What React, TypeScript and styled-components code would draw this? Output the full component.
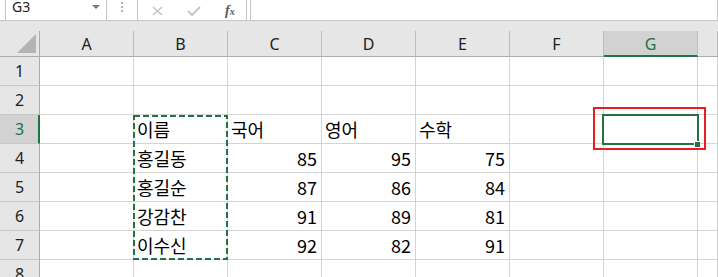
import styled, { createGlobalStyle } from 'styled-components';

const GlobalStyle = createGlobalStyle`
  html, body {
    margin: 0;
    padding: 0;
    background: #ffffff;
    overflow: hidden;
  }
`;

const COLUMNS = ['A', 'B', 'C', 'D', 'E', 'F', 'G', ''];
const SELECTED_COL = 'G';
const SELECTED_ROW = 3;

type CellValue = string | number | undefined;

// B..E columns of each row, rows 1..8
const DATA: CellValue[][] = [
  [],
  [],
  ['이름', '국어', '영어', '수학'],
  ['홍길동', 85, 95, 75],
  ['홍길순', 87, 86, 84],
  ['강감찬', 91, 89, 81],
  ['이수신', 92, 82, 91],
  [],
];

function App() {
  return (
    <Page>
      <GlobalStyle />
      <FormulaBar>
        <NameBox>
          <NameText>G3</NameText>
          <DropArrow />
        </NameBox>
        <Grip>
          <Dot />
          <Dot />
          <Dot />
        </Grip>
        <FxBox>
          <FxIcon>
            <svg width="11" height="10" viewBox="0 0 11 10">
              <path d="M1 1 L10 9 M10 1 L1 9" stroke="#c3c3c3" strokeWidth="1.4" fill="none" />
            </svg>
          </FxIcon>
          <FxIcon>
            <svg width="14" height="10" viewBox="0 0 14 10">
              <path d="M1 5 L5 9 L13 1" stroke="#c3c3c3" strokeWidth="1.8" fill="none" />
            </svg>
          </FxIcon>
          <FxLabel>
            f<sub>x</sub>
          </FxLabel>
        </FxBox>
        <FormulaInput />
      </FormulaBar>
      <Spacer />
      <Sheet>
        <Corner>
          <CornerTriangle />
        </Corner>
        {COLUMNS.map((col, i) => (
          <ColHeader key={`h${i}`} $selected={col === SELECTED_COL}>
            {col}
          </ColHeader>
        ))}
        {DATA.map((row, r) => {
          const rowNo = r + 1;
          return [
            <RowHeader key={`r${rowNo}`} $selected={rowNo === SELECTED_ROW}>
              {rowNo}
            </RowHeader>,
            ...COLUMNS.map((_, c) => {
              const value = c >= 1 && c <= 4 ? row[c - 1] : undefined;
              return (
                <Cell key={`c${rowNo}-${c}`} $numeric={typeof value === 'number'}>
                  {value}
                </Cell>
              );
            }),
          ];
        })}
        <CopyMarquee>
          <svg width="95" height="145" viewBox="0 0 95 145">
            <rect
              x="1"
              y="1"
              width="93"
              height="143"
              fill="none"
              stroke="#217346"
              strokeWidth="2"
              strokeDasharray="6 3"
            />
          </svg>
        </CopyMarquee>
        <ActiveCell />
        <FillHandle />
        <Highlight />
      </Sheet>
    </Page>
  );
}

const Page = styled.div`
  width: 718px;
  height: 277px;
  overflow: hidden;
  background: #ffffff;
`;

const FormulaBar = styled.div`
  display: flex;
  align-items: flex-end;
  height: 21px;
  overflow: hidden;
  background: #ffffff;
  border-bottom: 1px solid #c8c8c8;
  box-sizing: border-box;
  padding-left: 5px;
`;

const NameBox = styled.div`
  position: relative;
  box-sizing: border-box;
  width: 102px;
  height: 26px;
  border: 1px solid #c6c6c6;
  border-bottom: none;
  padding: 4px 0 0 6px;
`;

const NameText = styled.div`
  font-family: 'Noto Sans', sans-serif;
  font-size: 14px;
  line-height: 16px;
  color: #222222;
`;

const DropArrow = styled.div`
  position: absolute;
  right: 6px;
  top: 10px;
  width: 0;
  height: 0;
  border-left: 4px solid transparent;
  border-right: 4px solid transparent;
  border-top: 4px solid #7a7a7a;
`;

const Grip = styled.div`
  display: flex;
  flex-direction: column;
  align-self: flex-start;
  gap: 2px;
  margin: 2px 14px 0 14px;
`;

const Dot = styled.div`
  width: 2px;
  height: 2px;
  background: #b0b0b0;
`;

const FxBox = styled.div`
  display: flex;
  align-items: center;
  box-sizing: border-box;
  width: 110px;
  height: 26px;
  border: 1px solid #c6c6c6;
  border-bottom: none;
  padding: 6px 0 0 14px;
  gap: 24px;
`;

const FxIcon = styled.div`
  display: flex;
  align-items: center;
`;

const FxLabel = styled.div`
  font-family: 'Liberation Serif', serif;
  font-style: italic;
  font-weight: bold;
  font-size: 14px;
  color: #5a5a5a;

  sub {
    font-size: 10px;
    vertical-align: baseline;
  }
`;

const FormulaInput = styled.div`
  flex: 1;
  height: 26px;
  margin-left: 3px;
  border: 1px solid #c6c6c6;
  border-bottom: none;
  box-sizing: border-box;
`;

const Spacer = styled.div`
  height: 10px;
  background: #e6e6e6;
`;

const Sheet = styled.div`
  position: relative;
  display: grid;
  grid-template-columns: 40px repeat(7, 94px) 1fr;
  grid-template-rows: 26px repeat(8, 29px);
  background: #ffffff;
`;

const Corner = styled.div`
  position: relative;
  background: #e6e6e6;
  border-right: 1px solid #ababab;
  border-bottom: 1px solid #ababab;
`;

const CornerTriangle = styled.div`
  position: absolute;
  right: 3px;
  bottom: 3px;
  width: 19px;
  height: 19px;
  background: #b4b4b4;
  clip-path: polygon(100% 0, 100% 100%, 0 100%);
`;

const ColHeader = styled.div<{ $selected: boolean }>`
  display: flex;
  align-items: center;
  justify-content: center;
  box-sizing: border-box;
  background: ${(p) => (p.$selected ? '#d2d2d2' : '#e6e6e6')};
  border-right: 1px solid #bdbdbd;
  border-bottom: ${(p) => (p.$selected ? '2px solid #217346' : '1px solid #ababab')};
  padding-top: ${(p) => (p.$selected ? '1px' : '0')};
  font-family: 'Noto Sans', sans-serif;
  font-size: 16px;
  color: ${(p) => (p.$selected ? '#217346' : '#222222')};
`;

const RowHeader = styled.div<{ $selected: boolean }>`
  display: flex;
  align-items: center;
  justify-content: center;
  box-sizing: border-box;
  background: ${(p) => (p.$selected ? '#d2d2d2' : '#e6e6e6')};
  border-right: ${(p) => (p.$selected ? '2px solid #217346' : '1px solid #ababab')};
  border-bottom: 1px solid #c8c8c8;
  padding-left: ${(p) => (p.$selected ? '1px' : '0')};
  font-family: 'Noto Sans', sans-serif;
  font-size: 16px;
  color: ${(p) => (p.$selected ? '#217346' : '#222222')};
`;

const Cell = styled.div<{ $numeric: boolean }>`
  display: flex;
  align-items: center;
  justify-content: ${(p) => (p.$numeric ? 'flex-end' : 'flex-start')};
  box-sizing: border-box;
  padding: 0 4px 0 3px;
  border-right: 1px solid #d4d4d4;
  border-bottom: 1px solid #d4d4d4;
  font-family: 'Noto Sans CJK KR', 'Noto Sans', sans-serif;
  font-size: 18px;
  color: #000000;
  white-space: nowrap;
  overflow: visible;
`;

const CopyMarquee = styled.div`
  position: absolute;
  left: 133px;
  top: 84px;
  width: 95px;
  height: 145px;
  line-height: 0;
  pointer-events: none;
`;

const ActiveCell = styled.div`
  position: absolute;
  left: 602px;
  top: 83px;
  width: 97px;
  height: 31px;
  box-sizing: border-box;
  border: 2px solid #217346;
`;

const FillHandle = styled.div`
  position: absolute;
  left: 694px;
  top: 110px;
  width: 6px;
  height: 6px;
  box-sizing: border-box;
  background: #217346;
  border: 1px solid #ffffff;
  border-width: 1px 0 0 1px;
`;

const Highlight = styled.div`
  position: absolute;
  left: 593px;
  top: 76px;
  width: 113px;
  height: 43px;
  box-sizing: border-box;
  border: 2px solid #ed1c24;
`;

export default App;
